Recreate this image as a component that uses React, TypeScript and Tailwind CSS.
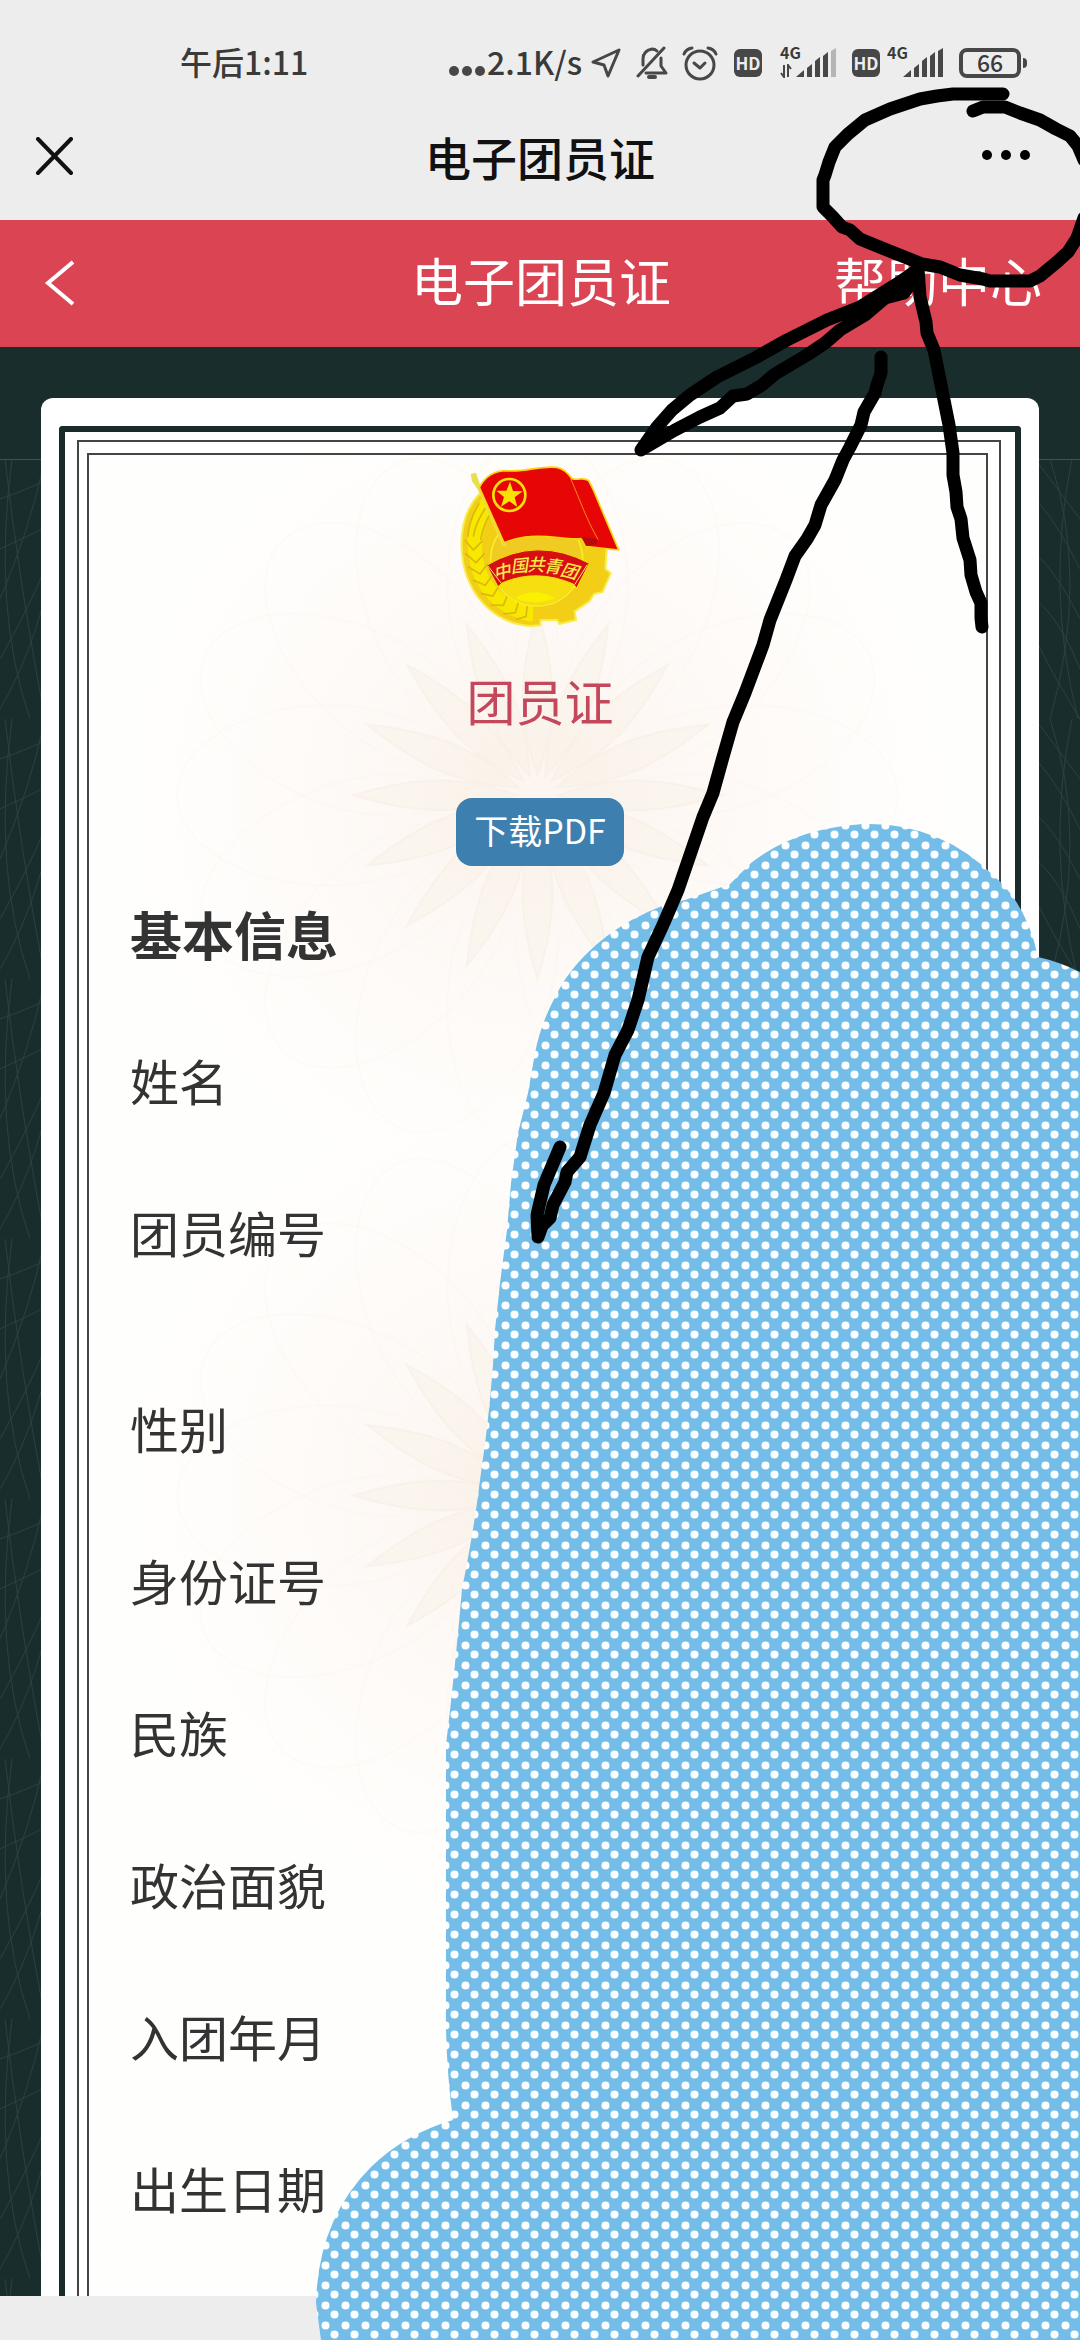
import React from 'react';

const FIELDS = [
  { label: '姓名', tall: false },
  { label: '团员编号', tall: true },
  { label: '性别', tall: false },
  { label: '身份证号', tall: false },
  { label: '民族', tall: false },
  { label: '政治面貌', tall: false },
  { label: '入团年月', tall: false },
  { label: '出生日期', tall: false },
];

function Bars({ weakLast }: { weakLast: boolean }) {
  return (
    <svg viewBox="0 0 40 30" className="h-[30px] w-10" fill="#474747" aria-hidden="true">
      <path d="M0 29 L8 22 V29Z" />
      <path d="M11 20 L16 16 V29 H11Z" />
      <path d="M19 13 L24 9 V29 H19Z" />
      <path d="M27 8 L32 4 V29 H27Z" />
      <path d="M35 3 L40 0 V29 H35Z" fill={weakLast ? '#b5b5b5' : '#474747'} />
    </svg>
  );
}

function HdBadge() {
  return (
    <span className="flex h-7 w-7 items-center justify-center rounded-md bg-[#474747] text-[17px] leading-none font-bold text-[#ededed]">
      HD
    </span>
  );
}

function StatusBar() {
  return (
    <div className="flex h-[125px] items-center pr-[53px] pl-[180px] text-[#3a3a3a]">
      <span className="pb-1 text-[32px] leading-none font-medium">午后1:11</span>
      <div className="ml-auto flex items-center">
        <svg viewBox="0 0 38 30" className="h-[30px] w-[38px]" fill="#474747" aria-hidden="true">
          <circle cx="5" cy="23" r="5" />
          <circle cx="18" cy="23" r="5" />
          <circle cx="31" cy="23" r="5" />
        </svg>
        <span className="w-24 pb-1 text-[32px] leading-none font-medium whitespace-nowrap">2.1K/s</span>
        <svg viewBox="0 0 32 32" className="ml-2 h-8 w-8" fill="none" stroke="#474747" strokeWidth="3" strokeLinejoin="round" aria-hidden="true">
          <path d="M28 3 L2 15 L13 18 L17 29 Z" />
        </svg>
        <svg viewBox="0 0 34 34" className="ml-3 h-[34px] w-[34px]" fill="none" stroke="#474747" strokeWidth="3" strokeLinecap="round" strokeLinejoin="round" aria-hidden="true">
          <path d="M29 2 L3 30" />
          <path d="M8 19 V13 C8 7 12 4 17 3 C19 3 21 4 22 5" />
          <path d="M26 12 V20 L31 27 H11" />
          <path d="M14 31 H20" strokeWidth="4" />
        </svg>
        <svg viewBox="0 0 36 36" className="ml-[13px] h-9 w-9" fill="none" stroke="#474747" strokeWidth="3" strokeLinecap="round" strokeLinejoin="round" aria-hidden="true">
          <circle cx="18" cy="20" r="14" />
          <path d="M12 18 L18 23 L23 18" />
          <path d="M2 9 Q4 4 10 3 M34 9 Q32 4 26 3" />
        </svg>
        <span className="w-4" />
        <HdBadge />
        <span className="relative ml-[34px]">
          <Bars weakLast />
          <span className="absolute -top-1 -left-4 text-base leading-none font-semibold">4G</span>
          <svg viewBox="0 0 12 14" className="absolute bottom-0 -left-4 h-[14px] w-3" fill="none" stroke="#474747" strokeWidth="2" aria-hidden="true">
            <path d="M4 1 V13 L1 9 M8 13 V1 L11 5" />
          </svg>
        </span>
        <span className="w-4" />
        <HdBadge />
        <span className="relative ml-[23px]">
          <Bars weakLast={false} />
          <span className="absolute -top-1 -left-4 text-base leading-none font-semibold">4G</span>
        </span>
        <span className="ml-4 flex h-[30px] w-[62px] items-center justify-center rounded-lg border-4 border-[#474747] text-[23px] leading-none font-medium">
          66
        </span>
        <span className="ml-[2px] h-[10px] w-1 rounded-r-sm bg-[#474747]" />
      </div>
    </div>
  );
}

function Emblem() {
  return (
    <svg viewBox="0 60 600 510" className="mt-[5px] h-[170px] w-[200px]" role="img" aria-label="团徽">
      <path
        d="M120 160 C70 210 55 290 70 370 C90 470 165 550 270 558 L300 556 L302 540 H352 L358 552 L408 540 L404 514 L448 484 L462 462 L488 456 L512 400 L496 386 L500 330 L420 180 Z"
        fill="#f2cf16"
        stroke="#f8ec4a"
        strokeWidth="6"
      />
      <path d="M130 170 C85 230 75 290 88 360 C105 460 180 530 278 545 L280 500 C200 490 140 430 128 350 C122 300 130 250 160 215Z" fill="#f8e800" />
      <g fill="none" stroke="#d9b80f" strokeWidth="5">
        <path d="M118 190 Q86 240 84 290 M136 205 Q106 250 100 290 M150 222 Q128 260 122 300" />
        <path d="M74 300 L100 330 L128 302 M76 340 L108 368 L134 340 M84 380 L120 402 L142 372 M98 420 L136 436 L158 404 M122 460 L158 468 L178 436 M152 495 L190 496 L204 462 M190 522 L226 518 L236 484 M228 538 L258 530 L262 498" />
      </g>
      <circle cx="290" cy="360" r="138" fill="#f0cb22" stroke="#f9ee2a" strokeWidth="5" />
      <path d="M175 430 A134 134 0 0 0 405 430 Q290 380 175 430Z" fill="#f6de10" />
      <path d="M225 474 Q285 440 345 474 Q285 500 225 474Z" fill="#fbf000" />
      <path d="M92 102 L108 98 L122 140 L200 318 L188 318 L112 146 L96 124Z" fill="#e8e04a" />
      <path
        d="M118 142 C135 110 165 92 200 92 C255 98 300 76 350 82 C372 86 385 100 396 116 C415 122 430 110 446 122 L460 150 L536 330 L440 320 L424 296 C370 300 330 284 270 290 C235 292 215 300 192 308Z"
        fill="#e60606"
        stroke="#fbd50f"
        strokeWidth="5"
        strokeLinejoin="round"
      />
      <path d="M392 116 C420 180 440 240 474 298 C470 310 440 302 424 296" fill="none" stroke="#fb8a1c" strokeWidth="3" />
      <path d="M424 290 L438 318 L470 312 L474 298Z" fill="#b80a0a" />
      <circle cx="208" cy="165" r="48" fill="#e60606" stroke="#f9e008" strokeWidth="8" />
      <path d="M210 125 L219 153 L248 154 L224 172 L232 201 L208 184 L183 200 L192 171 L169 152 L199 152Z" fill="#f9e008" />
      <path d="M140 376 Q290 286 448 370 L410 444 L400 432 Q290 385 188 428 L174 440Z" fill="#d80f12" stroke="#f9e008" strokeWidth="3" />
      <path d="M144 378 L184 430 M442 374 L404 434" stroke="#f9e97a" strokeWidth="3" />
      <g fill="#fbe84a" fontFamily="'Noto Sans CJK SC', sans-serif" fontSize="52" fontStyle="italic" fontWeight="500" textAnchor="middle">
        <text x="186" y="414" transform="rotate(-14 186 395)">中</text>
        <text x="238" y="396" transform="rotate(-6 238 380)">国</text>
        <text x="288" y="392">共</text>
        <text x="338" y="398" transform="rotate(6 338 380)">青</text>
        <text x="388" y="412" transform="rotate(14 388 394)">团</text>
      </g>
    </svg>
  );
}

const PETALS = Array.from({ length: 16 }, (_, i) => i * 22.5);

function Watermark() {
  return (
    <svg viewBox="0 0 900 1840" preserveAspectRatio="xMidYMin slice" className="absolute inset-0 h-full w-full" fill="none" aria-hidden="true">
      <defs>
        <radialGradient id="glow">
          <stop offset="0" stopColor="#fdf5ef" />
          <stop offset="0.5" stopColor="#fefaf7" />
          <stop offset="1" stopColor="#fefefc" stopOpacity="0" />
        </radialGradient>
      </defs>
      {[340, 1040].map((y) => (
        <g key={y} transform={`translate(450 ${y})`}>
          <circle r="440" fill="url(#glow)" />
          {PETALS.map((a) => (
            <g key={a} transform={`rotate(${a})`}>
              <path d="M0 -20 C18 -70 22 -110 0 -185 C-22 -110 -18 -70 0 -20Z" fill="#f6efe4" fillOpacity="0.4" stroke="#f7ece0" strokeOpacity="0.4" strokeWidth="2" />
              <ellipse cy="-210" rx="90" ry="150" stroke="#faf3ed" strokeWidth="2" strokeOpacity="0.25" />
            </g>
          ))}
        </g>
      ))}
    </svg>
  );
}

function Backdrop() {
  return (
    <svg className="absolute inset-x-0 top-28 bottom-0 h-[calc(100%-112px)] w-full" aria-hidden="true">
      <defs>
        <pattern id="lattice" width="270" height="260" patternUnits="userSpaceOnUse">
          <g fill="none" stroke="#2b403e" strokeWidth="1">
            <path d="M0 40 Q60 20 135 -30 M0 90 Q70 60 135 10 M0 140 Q30 70 45 0 M0 200 Q40 130 60 70 M5 0 Q20 130 45 260 M12 0 Q-8 150 30 260 M0 250 Q30 200 50 120" />
            <path d="M270 60 Q240 20 225 0 M270 110 Q245 60 225 40 M270 160 Q245 110 225 95 M270 210 Q250 160 225 140 M225 180 Q245 220 270 260 M262 0 Q235 130 268 260 M240 0 Q280 120 240 260" />
          </g>
        </pattern>
      </defs>
      <rect width="100%" height="100%" fill="url(#lattice)" />
      <rect width="100%" height="1" fill="#3d5350" />
    </svg>
  );
}

function Scribbles() {
  return (
    <svg viewBox="0 0 1080 2340" className="pointer-events-none absolute top-0 left-0 w-full" aria-hidden="true">
      <defs>
        <pattern id="dots" width="20" height="20" patternUnits="userSpaceOnUse">
          <rect width="20" height="20" fill="#73bde8" />
          <circle cx="5.5" cy="5.5" r="4" fill="#fff" />
          <circle cx="14.5" cy="14.5" r="4" fill="#fff" />
        </pattern>
      </defs>
      <path
        fill="url(#dots)"
        d="M864 824 Q795 828 751 863 L729 885 L722 887 L685 900 L662 906 Q600 930 566 978 Q542 1016 535 1053 L528 1093 L518 1133 L511 1183 L507 1230 L500 1283 L495 1330 Q492 1400 480 1480 Q474 1530 462 1589 Q455 1670 446 1745 V2000 Q445 2060 453 2120 Q405 2134 371 2167 Q318 2220 316 2303 L321 2340 H1080 V972 Q1060 962 1038 957 Q1027 905 995 877 Q940 822 864 824Z"
      />
      <g fill="none" stroke="#000" strokeWidth="13" strokeLinecap="round" strokeLinejoin="round">
        <path d="M1003 94 H953 L937 96 L920 99 L890 109 L865 120 L848 134 L835 147 L829 162 L825 175 L823 180 V207 L833 217 L842 227 L850 230 L860 239 L887 250 L922 264 L940 267 L960 275 L983 279 L990 281 H1030 L1040 276 L1057 262 L1068 252 L1077 238 L1084 218" />
        <path d="M973 111 L983 107 H1005 L1020 113 L1040 120 L1056 129 L1070 136 L1078 146 L1084 160" />
        <path d="M917 270 L900 282 L860 307 L827 320 L787 340 L755 358 L717 377 L690 395 L672 410 L657 427 L641 450 L675 430 L700 417 L720 408 L733 396 L747 394 L762 385 L775 374 L807 355 L825 343 L840 330 L865 315 L885 298 L904 293 L917 275" />
        <path d="M918 268 L920 297 L926 322 L927 333 L934 350 L942 390 L949 425 L953 453 V475 L956 492 L957 507 L961 519 L963 538 L970 560 L971 575 L976 592 L981 603 V618 L982 627" />
        <path d="M881 357 V373 L877 385 L875 393 L864 412 L861 425 L850 447 L843 460 L835 480 L821 505 L815 525 L807 539 L795 556 L786 580 L770 620 L763 645 L745 693 L733 722 L723 757 L713 793 L703 817 L690 855 L678 890 L663 925 L648 957 L638 1000 L628 1030 L615 1055 L604 1093 L590 1125 L580 1157 L567 1172 L565 1182 L553 1205 L550 1218 L542 1226 L538 1237 L537 1215 L544 1185 L560 1147" />
      </g>
    </svg>
  );
}

export default function App() {
  return (
    <div className="relative flex min-h-screen flex-col overflow-hidden bg-[#ededed] font-['Noto_Sans_CJK_SC',sans-serif]">
      <StatusBar />
      <div className="grid h-[95px] grid-cols-[1fr_auto_1fr] items-start px-[34px]">
        <button type="button" aria-label="关闭" className="mt-3 w-10">
          <svg viewBox="0 0 40 40" className="h-10 w-10" fill="none" stroke="#111" strokeWidth="4" strokeLinecap="round" aria-hidden="true">
            <path d="M4 2 L37 36 M37 2 L4 36" />
          </svg>
        </button>
        <h1 className="text-[46px] leading-[62px] font-medium text-[#111]">电子团员证</h1>
        <button type="button" aria-label="更多" className="mt-6 mr-4 justify-self-end">
          <svg viewBox="0 0 48 12" className="h-3 w-12" fill="#000" aria-hidden="true">
            <circle cx="5" cy="6" r="5" />
            <circle cx="24" cy="6" r="5" />
            <circle cx="43" cy="6" r="5" />
          </svg>
        </button>
      </div>
      <header className="grid h-[127px] grid-cols-[1fr_auto_1fr] items-center bg-[#da4453] pr-[38px] pl-10 text-white">
        <button type="button" aria-label="返回" className="w-10">
          <svg viewBox="0 0 40 48" className="h-12 w-10" fill="none" stroke="#fff" strokeWidth="4" aria-hidden="true">
            <path d="M33 2 L8 23 L33 44" />
          </svg>
        </button>
        <h2 className="pb-2 text-[52px] leading-[72px]">电子团员证</h2>
        <a href="#help" className="justify-self-end pb-2 text-[52px] leading-[72px]">帮助中心</a>
      </header>
      <main className="relative bg-[#1a2d2d]">
        <Backdrop />
        <section className="relative mx-[41px] mt-[51px] rounded-t-xl bg-white px-[18px] pt-7">
          <div className="rounded-t border-[6px] border-b-0 border-[#1a2b2b] pt-2 pr-[14px] pl-3">
            <div className="border-2 border-b-0 border-[#444] pt-[11px] pr-[11px] pl-2">
              <div className="relative flex flex-col items-center border-2 border-b-0 border-[#444] bg-[#fefefc] pb-8">
                <Watermark />
                <div className="relative flex w-full flex-col items-center pl-[5px]">
                  <Emblem />
                  <p className="mt-[34px] text-[49px] leading-[72px] text-[#c5475b]">团员证</p>
                  <button type="button" className="mt-[62px] h-[68px] rounded-2xl bg-[#3d7fae] px-[18px] pb-1 text-[34px] leading-[62px] text-white">
                    下载PDF
                  </button>
                  <h3 className="w-full pl-9 text-[52px] leading-[135px] font-bold text-[#333]">基本信息</h3>
                  <ul className="w-full pt-[3px] pl-9 text-[49px] text-[#333]">
                    {FIELDS.map((f) => (
                      <li key={f.label} className={f.tall ? 'pb-11 leading-[152px]' : 'leading-[152px]'}>
                        {f.label}
                      </li>
                    ))}
                  </ul>
                </div>
              </div>
            </div>
          </div>
        </section>
      </main>
      <div className="h-11 bg-[#ededed]" />
      <Scribbles />
    </div>
  );
}
